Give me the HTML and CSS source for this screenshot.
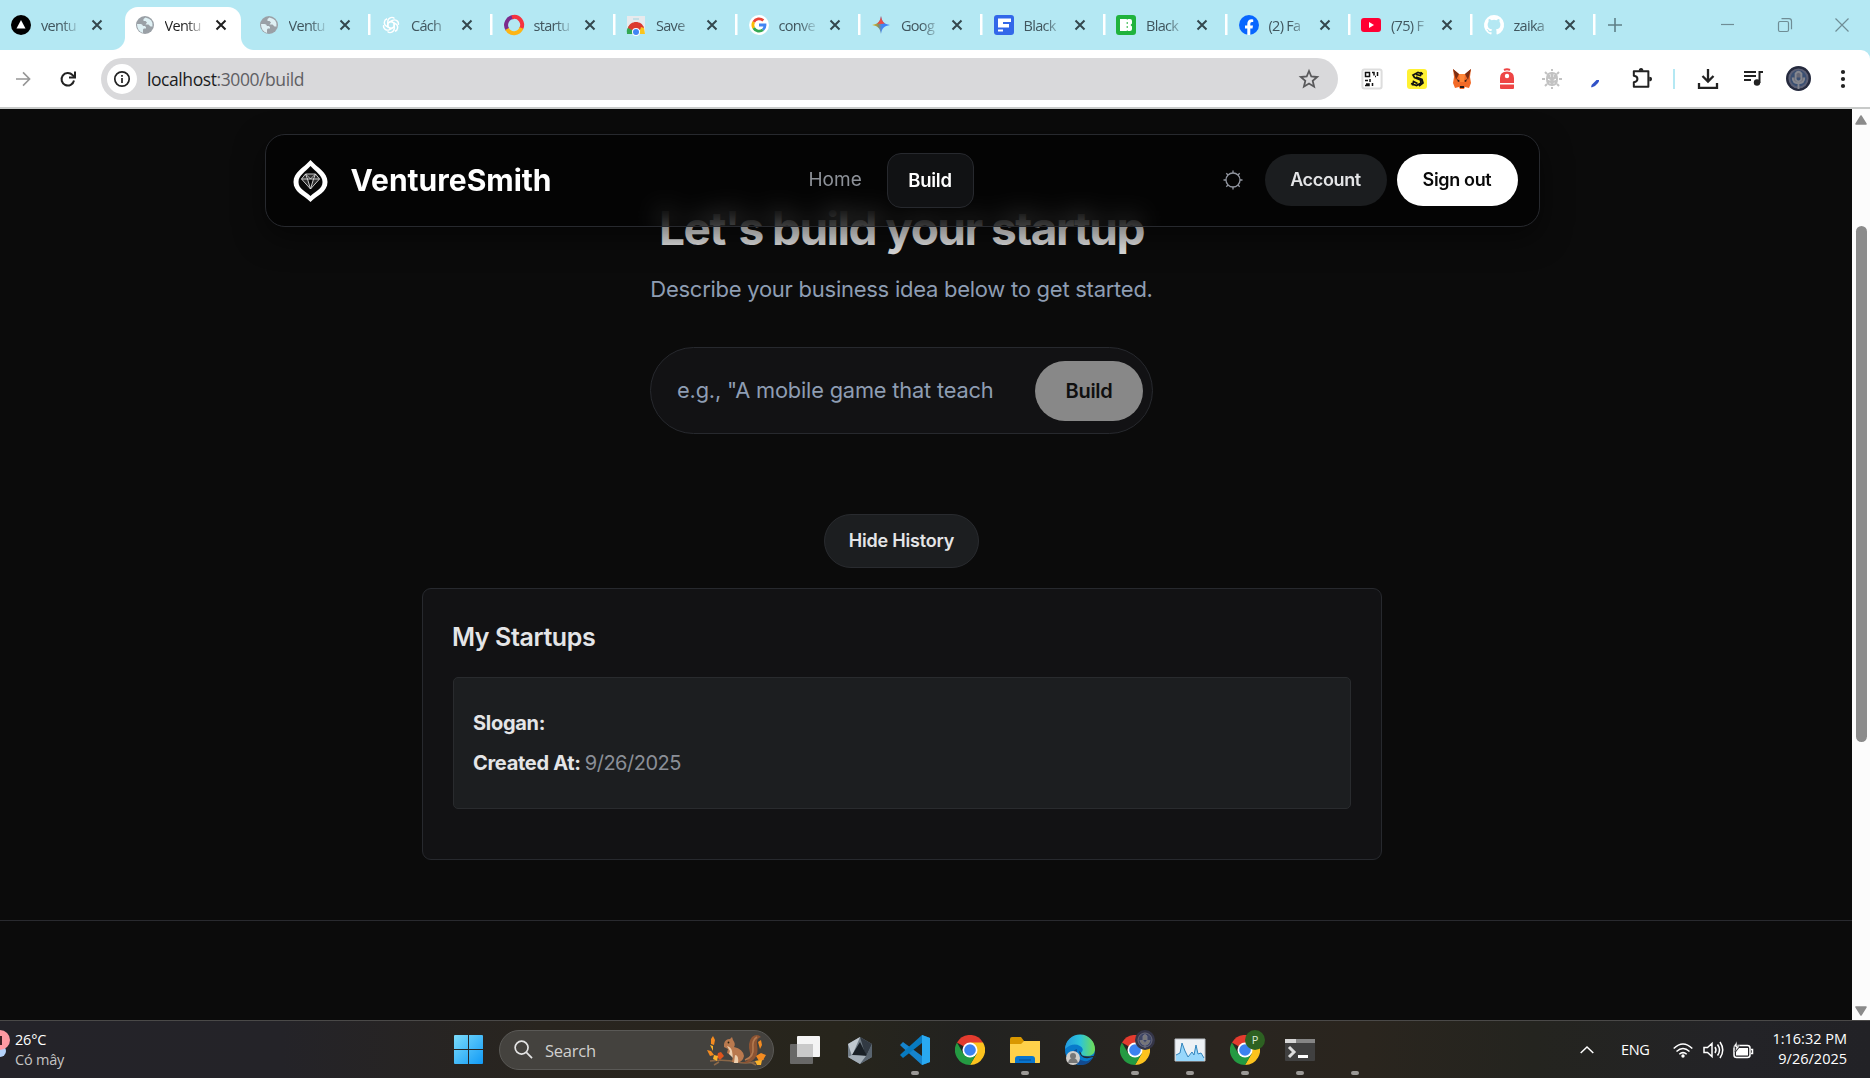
FILE: index.html
```html
<!DOCTYPE html>
<html lang="en">
<head>
<meta charset="utf-8">
<title>VentureSmith</title>
<link rel="stylesheet" href="styles.css">
</head>
<body>
<svg class="defs" width="0" height="0" aria-hidden="true">
  <defs>
    <symbol id="x" viewBox="0 0 12 12"><path d="M1.500 1.500l9 9M10.500 1.500l-9 9" stroke="currentColor" stroke-width="2"/></symbol>
    <symbol id="globe" viewBox="0 0 20 20"><circle cx="10" cy="10" r="9" fill="#9aa0a6"/><path d="M2 9h3.500q2 0 2.500 2h2q1.500 1 1 2.500H9q-1 0-1 1.500v3Q2 16 2 9zM10.500 2.500l-2 1.500v2h2l1.500 1.500-1.500 2h3l2 2h2Q18.500 4 10.500 2.500z" fill="#dff0f4"/></symbol>
    <symbol id="chrome" viewBox="0 0 32 32"><path d="M16 16L2.100 8A16 16 0 0 1 29.900 8z" fill="#e33b2e"/><path d="M16 8h13.900A16 16 0 0 1 16 32l7-12z" fill="#fcc31e"/><path d="M2.100 8A16 16 0 0 0 16 32l7-12-7 2-7-2z" fill="#249a42"/><circle cx="16" cy="16" r="8" fill="#fff"/><circle cx="16" cy="16" r="6.200" fill="#3b82f0"/></symbol>
  </defs>
</svg>
<div class="screen">
  <header class="tabs">
    <div class="tab"><svg viewBox="0 0 20 20"><circle cx="10" cy="10" r="10"/><path d="M10 5l4.500 8.500h-9z" fill="#fff"/></svg><span>ventu</span><svg class="close"><use href="#x"/></svg></div>
    <div class="tab active"><svg><use href="#globe"/></svg><span>Ventu</span><svg class="close"><use href="#x"/></svg></div>
    <div class="tab"><svg><use href="#globe"/></svg><span>Ventu</span><svg class="close"><use href="#x"/></svg></div>
    <div class="tab sep"><svg viewBox="0 0 20 20"><g fill="none" stroke="#fff" stroke-width="1.400"><path id="petal" d="M10 6.400L13.200 8.200V13.500A4 4 0 0 1 6.500 16.500"/><use href="#petal" transform="rotate(60 10 10)"/><use href="#petal" transform="rotate(120 10 10)"/><use href="#petal" transform="rotate(180 10 10)"/><use href="#petal" transform="rotate(240 10 10)"/><use href="#petal" transform="rotate(300 10 10)"/></g></svg><span>Cách</span><svg class="close"><use href="#x"/></svg></div>
    <div class="tab sep"><svg viewBox="0 0 20 20"><g fill="none" stroke-width="4"><path d="M10 2A8 8 0 0 0 3.500 14.500" stroke="#7d2a8c"/><path d="M8 2.200A8 8 0 0 1 17 14" stroke="#f5333f"/><path d="M3 14A8 8 0 0 0 17.500 13" stroke="#fdb515"/></g></svg><span>startu</span><svg class="close"><use href="#x"/></svg></div>
    <div class="tab sep"><svg viewBox="0 0 20 20"><path d="M1 1h18v18H1z" fill="#e8eaed"/><path d="M7 3h6v2H7z" fill="#c4dfe6"/><path d="M1 19a9 9 0 0 1 3-9l4 9z" fill="#34a853"/><path d="M2 13c2-8 14-8 16 0l-4 2H6z" fill="#dc3a30"/><path d="M13 19l2-7 3 1 1 6z" fill="#fbc51c"/><circle cx="10" cy="17" r="4" fill="#fff"/><circle cx="10" cy="17" r="3" fill="#4285f4"/></svg><span>Save</span><svg class="close"><use href="#x"/></svg></div>
    <div class="tab sep"><svg viewBox="0 0 20 20"><circle cx="10" cy="10" r="10" fill="#fff"/><g fill="none" stroke-width="2.800"><path d="M14.300 5.600A6.100 6.100 0 0 0 4.700 7" stroke="#ea4335"/><path d="M4.700 7a6.100 6.100 0 0 0 0 6" stroke="#fbbc05"/><path d="M4.700 13a6.100 6.100 0 0 0 9.300 1.700" stroke="#34a853"/><path d="M14 14.700a6.100 6.100 0 0 0 2-4.700h-6" stroke="#4285f4"/></g></svg><span>conve</span><svg class="close"><use href="#x"/></svg></div>
    <div class="tab sep"><svg viewBox="0 0 20 20"><defs><linearGradient id="gem"><stop stop-color="#fbbc04"/><stop offset=".35" stop-color="#89905f"/><stop offset=".55" stop-color="#4285f4"/><stop offset="1" stop-color="#347fff"/></linearGradient></defs><path d="M10 1c1 6 3 8 9 9-6 1-8 3-9 9-1-6-3-8-9-9 6-1 8-3 9-9z" fill="url(#gem)"/><path d="M10 1c.7 4 1.700 6 4 7.500L10 9 6 8.500C8.300 7 9.400 5 10 1z" fill="#ea4c45"/></svg><span>Goog</span><svg class="close"><use href="#x"/></svg></div>
    <div class="tab sep"><svg viewBox="0 0 20 20"><rect width="20" height="20" rx="3" fill="#3267e9"/><path d="M4 3.500h13V7H9v2h6v3.500H4z" fill="#fff"/><path d="M4 14.500h5v2H4z" fill="#fff"/></svg><span>Black</span><svg class="close"><use href="#x"/></svg></div>
    <div class="tab sep"><svg viewBox="0 0 20 20"><rect width="20" height="20" rx="3" fill="#20b33c"/><path d="M4 4h6.500l.7.800L12 4h2q2 0 2 2v2.500L14.500 10l1.500 1.500V14q0 2-2 2h-2l-.8-.8-.7.800H4z" fill="#fff"/><path d="M11.200 7v2M11.200 11v2" stroke="#20b33c" stroke-width="1"/></svg><span>Black</span><svg class="close"><use href="#x"/></svg></div>
    <div class="tab sep"><svg viewBox="0 0 20 20"><circle cx="10" cy="10" r="10" fill="#0866ff"/><path d="M8.300 20v-6.500H6v-3h2.300V9q0-4.700 4.500-4.700l1.400.2v2.600h-1.300q-1.600 0-1.600 1.700v1.700H14l-.5 3h-2.200V20z" fill="#fff"/></svg><span>(2) Fa</span><svg class="close"><use href="#x"/></svg></div>
    <div class="tab sep"><svg viewBox="0 0 20 20"><rect y="3" width="20" height="14" rx="3" fill="#ff0033"/><path d="M8 7l5 3-5 3z" fill="#fff"/></svg><span>(75) F</span><svg class="close"><use href="#x"/></svg></div>
    <div class="tab sep"><svg viewBox="0 0 16 16"><path fill="#fff" d="M8 0a8 8 0 0 0-2.530 15.590c.4.070.55-.17.55-.38v-1.490c-2.010.37-2.530-.49-2.690-.94-.09-.23-.48-.94-.82-1.130-.28-.15-.68-.52-.01-.53.63-.01 1.080.58 1.230.82.720 1.210 1.870.87 2.330.66.070-.52.280-.87.510-1.070-1.780-.2-3.640-.89-3.640-3.950 0-.87.310-1.590.82-2.150-.08-.2-.36-1.020.08-2.120 0 0 .67-.21 2.200.82a7.500 7.500 0 0 1 4 0c1.530-1.040 2.200-.82 2.200-.82.440 1.100.16 1.920.08 2.120.510.56.820 1.270.820 2.150 0 3.070-1.870 3.750-3.650 3.950.290.250.540.730.540 1.480v2.200c0 .21.150.46.550.38A8 8 0 0 0 8 0"/></svg><span>zaika</span><svg class="close"><use href="#x"/></svg></div>
    <div class="newtab sep"><svg viewBox="0 0 14 14"><path d="M7 0v14M0 7h14"/></svg></div>
    <div class="winbtns">
      <svg viewBox="0 0 14 14"><path d="M0 6.500h13"/></svg>
      <svg viewBox="0 0 14 14"><rect x=".5" y="3.500" width="10" height="10" rx="1.500"/><path d="M3.500.7h7.500q2.500 0 2.500 2.500v8"/></svg>
      <svg viewBox="0 0 14 14"><path d="M.5.5l13 13M13.500.5l-13 13"/></svg>
    </div>
  </header>
  <div class="toolbar">
    <svg class="fwd" viewBox="0 0 16 16"><path d="M0 8h14M7.500 1l7 7-7 7"/></svg>
    <svg class="reload" viewBox="0 0 16 16"><path d="M14 9.500A6.300 6.300 0 1 1 12.500 4L14.500 6"/><path d="M15 .5V6.500H9"/></svg>
    <div class="omni">
      <i><svg viewBox="0 0 16 16"><circle cx="8" cy="8" r="7.200"/><path d="M8 7v5M8 4v1.800"/></svg></i>
      <p><b>localhost</b>:3000/build</p>
      <svg class="star" viewBox="0 0 20 20"><path d="M10 2l2.300 5.500 5.900.5-4.500 3.900 1.400 5.800L10 14.600l-5.100 3.100 1.400-5.800L1.800 8l5.900-.5z"/></svg>
    </div>
    <div class="exts">
      <svg viewBox="0 0 20 20"><rect x=".4" y=".4" width="19.200" height="19.200" rx="2" fill="#fff" stroke="#ddd"/><path d="M3.500 3.500h4v4h-4zM10 3.500h2v3M13 7.500h1M15.500 3v4M3 11.500h3M8 10v3M4 15h3v1.500H3M10.500 14v3" fill="none" stroke="#111" stroke-width="1.500"/><path d="M14 11v3h3.500A3.500 3.500 0 1 1 14 11z"/></svg>
      <svg viewBox="0 0 20 20"><rect width="20" height="20" rx="3" fill="#fff133"/><path d="M16 5l-5-1.500L6 6l1.500 2.500 6 2.500.5 3-4.500 2.500L4 14.500M14.500 3l-1 3.500L9 5.500M9 8l6 2.500 1 3.500-4 3M5.500 16.500l1-4 4 2" fill="none" stroke="#111" stroke-width="1.700"/></svg>
      <svg viewBox="0 0 20 20"><path d="M1 0l6 5h6l6-5-1 8 1 6-2 5-4-1-1 2H8l-1-2-4 1-2-5 1-6z" fill="#f26a27"/><path d="M1 0l6 5-3 6zM19 0l-6 5 3 6z" fill="#7c2d12"/><path d="M5 10l3 2-2 1zM15 10l-3 2 2 1zM8 17h4v2H8z" fill="#271b18"/><path d="M7 5h6l-1 8h-4z" fill="#ff8637"/></svg>
      <svg viewBox="0 0 20 20"><path d="M7 1q3-1.500 6 0" fill="none" stroke="#ee4545"/><path d="M3 9q0-6.500 7-6.500T17 9v5H3zM3 15.500h14V19q0 1-1 1H4q-1 0-1-1z" fill="#ee4545"/><circle cx="10" cy="7" r="2.200" fill="#fff"/></svg>
      <svg viewBox="0 0 20 20"><g fill="none" stroke="#c2c2c2"><path d="M9.500 4Q5 4 5 10t4.500 6zM10.500 4Q15 4 15 10t-4.500 6zM7 6v3l2 1M6 12l3 1M13 6v3l-2 1M14 12l-3 1M10 0v2M10 18v2M0 10h3M17 10h3M3 3l2 2M17 3l-2 2M3 17l2-2M17 17l-2-2"/></g></svg>
      <svg viewBox="0 0 20 20"><path d="M9.500 11H12q.5 1-1 3l-3 3-3.500 1.500q-1-1 .5-3z" fill="#3152c8"/></svg>
      <svg class="puzzle" viewBox="0 0 22 24"><path d="M2 3.500h16v17H2v-5q4-.5 4-3.500T2 8.500z" fill="none" stroke="#222" stroke-width="2.200" stroke-linejoin="round"/><path d="M7.500 3q0-3 2.500-3t2.500 3zM19 9.500q3 0 3 2.500t-3 2.500z" fill="#222"/></svg>
    </div>
    <div class="tools">
      <svg class="dl" viewBox="0 0 20 20"><path d="M10 0v12M4.500 7L10 12.500 15.500 7M1 14v4.800h18V14"/></svg>
      <svg class="media" viewBox="0 0 20 20"><path d="M0 3h12M0 7h12M0 11h7M15.500 14V3H19"/><circle cx="13" cy="13.500" r="3.200"/></svg>
      <svg class="avatar" viewBox="0 0 26 26"><circle cx="13" cy="13" r="13" fill="#252a3e"/><circle cx="13" cy="13" r="9.500" fill="#3a4f72" stroke="#5c6076"/><path d="M10 8q3-4 6 0v6q-3 4-6 0zM7 12q0 6 6 6t6-6M13 18v6" fill="#666775" stroke="#85878f"/></svg>
      <svg class="menu" viewBox="0 0 6 22"><circle cx="3" cy="4" r="2.100"/><circle cx="3" cy="11" r="2.100"/><circle cx="3" cy="18" r="2.100"/></svg>
    </div>
  </div>
  <div class="viewport">
    <main class="page">
      <nav class="nav">
        <div class="brand">
          <svg viewBox="0 0 36 42"><path d="M18 0C25 8 35 12 35 22S25 35 18 42C11 35 1 32 1 22S11 8 18 0z" fill="#fff"/><path d="M18 6c5 6 12 9 12 16s-7 9-12 14C13 31 6 29 6 22S13 12 18 6z" fill="#070707"/><path d="M13 14h10l4 5-9 10-9-10zM9 19h18M13 14l2 5 3 10 3-10 2-5M13 14l5 5 5-5" fill="#777" fill-opacity=".35" stroke="#ddd" stroke-width=".9"/></svg>
          <span>VentureSmith</span>
        </div>
        <div class="links"><a>Home</a><a class="on"><span>Build</span></a></div>
        <div class="actions">
          <svg viewBox="0 0 20 20"><circle cx="10" cy="10" r="7"/><path d="M10 .5V3M10 17v2.500M.5 10H3M17 10h2.500M3.300 3.300L5 5M15 15l1.700 1.700M3.300 16.700L5 15M15 5l1.700-1.700"/></svg>
          <button class="account"><span>Account</span></button><button class="signout"><span>Sign out</span></button>
        </div>
      </nav>
      <section class="hero">
        <h1><span>Let's build your startup</span></h1>
        <p class="sub"><span>Describe your business idea below to get started.</span></p>
        <div class="idea"><span>e.g., "A mobile game that teach</span><button>Build</button></div>
        <button class="hide"><span>Hide History</span></button>
      </section>
      <section class="card">
        <h2><span>My Startups</span></h2>
        <div class="item">
          <p><strong class="slogan">Slogan:</strong></p>
          <p><strong class="created">Created At:</strong> <span class="date">9/26/2025</span></p>
        </div>
      </section>
      <footer class="foot"></footer>
    </main>
    <div class="scroll">
      <svg viewBox="0 0 14 12"><path d="M7 2l5 8h-10z"/></svg>
      <i></i>
      <svg viewBox="0 0 14 12"><path d="M7 10L2 2h10z"/></svg>
    </div>
  </div>
  <footer class="taskbar">
    <div class="weather"><svg viewBox="0 0 10 32"><circle cx="0" cy="21" r="6" fill="#b5d2fa"/><circle cx="0" cy="10" r="10" fill="#ff9aa2"/><path d="M1 6v9" stroke="#402024" stroke-width="2"/></svg><div><p>26°C</p><p class="dim">Có mây</p></div></div>
    <svg class="start" viewBox="0 0 30 30"><defs><linearGradient id="win" x2="1" y2="1"><stop stop-color="#7bdcfb"/><stop offset="1" stop-color="#119af6"/></linearGradient></defs><path d="M0 1q0-1 1-1h13.500v14.500H0zM15.500 0H29q1 0 1 1v13.500H15.500zM0 15.500h14.500V30H1q-1 0-1-1zM15.500 15.500H30V29q0 1-1 1H15.500z" fill="url(#win)"/></svg>
    <div class="search">
      <svg class="lens" viewBox="0 0 20 20"><circle cx="8" cy="8" r="6.800"/><path d="M13 13l6 6"/></svg><span>Search</span>
      <svg class="squirrel" viewBox="0 0 60 32"><path d="M3 27q15-2 27 1t27-3M12 28l-5 3M43 28l6 3" fill="none" stroke="#8a6748" stroke-width="1.500"/><path d="M32 29q12-1 11-10-3-10 2-16 5-4 9 0-5 1-4 8 3 14-10 18z" fill="#8d5433"/><path d="M38 26q9-3 8-12-1-8 4-11" fill="none" stroke="#b47a50" stroke-width="1.600"/><path d="M17 10q1-5 6-5l2-2 1 3q3 4 1 7 9 2 10 9-1 6-8 7l-4-1 1-6-6-3 1-4-4-2z" fill="#b9794e"/><path d="M20 12q4 1 5 5l1 7-4-4 1-3zM28 21q4 0 3 8h-4z" fill="#edcfae"/><circle cx="21.500" cy="8.500" r=".9" fill="#221"/><g fill="#f48b20"><path d="M4 5l2-3 2 4-1 5-3-1zM0 16l4 1 3 4-4 1zM51 8l3-2 1 5-2 4zM49 22l5-3 5 2-3 5-4 1z"/><path d="M11 19l3-1 3 4-4 4-3-3z" fill="#df541c"/><path d="M3 11l3 1v5zM48 27l7-1-1 5h-4zM7 21l4 1-1 5-4-2z" fill="#fbb32b"/></g></svg>
    </div>
    <div class="apps">
      <div class="app"><svg viewBox="0 0 30 30"><rect x="7" y="1" width="23" height="21" rx="1" fill="#f4f4f4"/><rect y="9" width="23" height="20" rx="1" fill="#747474" opacity=".85"/><path d="M7 9h16v13H7z" fill="#c9c9c9"/></svg></div>
      <div class="app"><svg viewBox="0 0 30 30"><path d="M15 2l12 7v13l-12 7-12-7V9z" fill="#737e88"/><path d="M15 2L3 9l4 12z" fill="#c0c8cf"/><path d="M15 2l12 7-6 13z" fill="#323a43"/><path d="M15 7l7 14-15-1z" fill="#1a2026"/><path d="M3 22l4-2 15 1-7 8z" fill="#a4aeb7"/><path d="M27 9v13l-12 7 6-8z" fill="#59646f"/></svg></div>
      <div class="app run"><svg viewBox="0 0 30 30"><path d="M22 0l8 3v24l-8 3L2 12l-2-2 3-3 19 14z" fill="#1684cd"/><path d="M22 0v8L3 23l-3-3 2-2z" fill="#087bc1"/><path d="M22 0l8 3v24l-8 3z" fill="#29a9f1"/></svg></div>
      <div class="app"><svg><use href="#chrome"/></svg></div>
      <div class="app run"><svg viewBox="0 0 30 30"><path d="M0 4q0-2 2-2h9l3 4h16v21q0 1-1 1H1q-1 0-1-1z" fill="#d99700"/><path d="M0 9h11l3-3h16v21q0 1-1 1H1q-1 0-1-1z" fill="#ffd14a"/><path d="M5 28v-4q0-3 3-3h14q3 0 3 3v4z" fill="#0875ce"/><path d="M9 25h12" stroke="#034c91"/></svg></div>
      <div class="app"><svg viewBox="0 0 30 30"><defs><linearGradient id="edge"><stop stop-color="#2399df"/><stop offset=".5" stop-color="#2cc4da"/><stop offset="1" stop-color="#72de52"/></linearGradient></defs><circle cx="15" cy="15" r="15" fill="#087acb"/><path d="M0 14A15 15 0 0 1 30 15q-1 6-8 6-6 0-6-3 4-4-1-7-7-4-15 3z" fill="url(#edge)"/><path d="M12 14q-2 10 7 12 5 1 9-4-4 9-13 8-9-2-8-10 1-5 5-6z" fill="#124b91"/><path d="M16 18q0 5 12 3l3-1v3l-3-1q-12 4-14-6z" fill="#25282b"/><circle cx="8" cy="23" r="7" fill="#d0cecb"/><circle cx="8" cy="21" r="3" fill="#777"/><path d="M3 28q1-5 5-5t5 5z" fill="#777"/></svg></div>
      <div class="app run"><svg><use href="#chrome"/></svg><svg class="badge" viewBox="0 0 20 20"><circle cx="10" cy="10" r="10" fill="#343548"/><circle cx="10" cy="10" r="7" fill="#3d4565" stroke="#676879"/><path d="M8 6q2-3 4 0v5q-2 3-4 0zM5 10q1 5 5 5t5-5M10 15v3" fill="#777" stroke="#777687"/></svg></div>
      <div class="app run"><svg viewBox="0 0 30 30"><path d="M0 4h30v22H0z" fill="#edf1f5" stroke="#b9bec3"/><path d="M1 20l4-2 2-10 3 8 3 6 4-5 2 3 2-10 2 9 3-1 3 5v3H1z" fill="#98d7fb"/><path d="M1 20l4-2 2-10 3 8 3 6 4-5 2 3 2-10 2 9 3-1 3 5" fill="none" stroke="#3285bd"/></svg></div>
      <div class="app run"><svg><use href="#chrome"/></svg><b class="badge">P</b></div>
      <div class="app run"><svg viewBox="0 0 30 30"><rect y="4" width="30" height="22" rx="1" fill="#404040"/><path d="M0 4h30v4H0z" fill="#858585"/><path d="M0 4h11v4H0z" fill="#d5d5d5"/><path d="M4 12l5 5-5 5" fill="none" stroke="#ddd" stroke-width="3"/><path d="M13 21.500h10" stroke="#fff" stroke-width="3"/></svg></div>
      <div class="app run"></div>
    </div>
    <div class="tray">
      <svg class="chev" viewBox="0 0 14 8"><path d="M.7 7L7 1l6.300 6"/></svg>
      <span class="eng">ENG</span>
      <svg class="wifi" viewBox="0 0 20 16"><path d="M.7 6.500Q10-2.500 19.300 6.500M3.500 9.500q6.500-6 13 0M6.300 12.200q3.700-3.200 7.400 0"/><circle cx="10" cy="14" r="1.700" fill="#fff" stroke="none"/></svg>
      <svg class="vol" viewBox="0 0 20 18"><path d="M1 6.500h3.500L9 2.500v13l-4.500-4H1zM12 6q2 3 0 6M14.500 3.500q4 5.500 0 11M17 1q5.500 8 0 16"/></svg>
      <svg class="bat" viewBox="0 0 20 18"><rect x="1" y="4.500" width="16" height="12" rx="2.500"/><path d="M18 8.500h1.500v4H18" /><path d="M6 7h9v7.500H3V11z" fill="#fff" stroke="none"/><path d="M4 0L0 6h3l-1 5 5-6H4z" fill="#fff" stroke="#232327" stroke-width=".6"/></svg>
      <div class="clock"><p><span>1:16:32 PM</span></p><p class="day"><span>9/26/2025</span></p></div>
    </div>
  </footer>
</div>
</body>
</html>
```
FILE: styles.css
```css
* { box-sizing: border-box; }
body { margin: 0; background: #0b0b0b; font-family: "Open Sans", "Noto Sans", sans-serif; overflow: hidden; }
p, h1, h2 { margin: 0; }
svg { display: block; flex: none; overflow: visible; }
button { border: 0; padding: 0; font: inherit; }
.defs { position: absolute; }
.screen { width: 1870px; height: 1078px; display: flex; flex-direction: column; background: #b4e8f3; }

/* Tab strip */
.tabs { height: 50px; background: #b4e8f3; display: flex; flex: none; }
.tab { width: 122.500px; height: 50px; flex: none; display: flex; align-items: center; padding-left: 11px; position: relative; color: #41565e; font-size: 14.500px; }
.tab > svg { width: 20px; height: 20px; }
.tab span { width: 38px; margin-left: 10px; white-space: nowrap; letter-spacing: -.7px; -webkit-mask-image: linear-gradient(90deg, #000 55%, rgba(0, 0, 0, .15) 98%); mask-image: linear-gradient(90deg, #000 55%, rgba(0, 0, 0, .15) 98%); }
.tab .close { width: 12px; height: 12px; margin-left: 12px; color: #34484e; }
.tab.active { color: #1f1f1f; padding-left: 12px; }
.tab.active .close { color: #1f1f1f; }
.tab.active::before { content: ""; position: absolute; z-index: 0; left: 2.500px; top: 7px; width: 116px; height: 43px; border-radius: 13px 13px 0 0; background: #fff; }
.tab.active::after { content: ""; position: absolute; left: -10.500px; width: 142px; bottom: 0; height: 13px; background: radial-gradient(circle at 0 0, transparent 12.500px, #fff 13.500px) left / 13px 13px no-repeat, radial-gradient(circle at 100% 0, transparent 12.500px, #fff 13.500px) right / 13px 13px no-repeat; }
.tab.active > * { position: relative; z-index: 1; }
.sep { background: linear-gradient(#fff, #fff) 0 14px / 2.500px 21px no-repeat; }
.tab.sep > svg:first-child, .tab:nth-child(3) > svg:first-child { margin-left: 2.500px; }
.newtab { width: 60px; padding: 18px 0 0 15px; }
.newtab svg { width: 14px; height: 14px; stroke: #5f7f87; stroke-width: 1.600; }
.winbtns { margin-left: auto; display: flex; gap: 43px; padding: 18px 21px 0 0; }
.winbtns svg { width: 14px; height: 14px; fill: none; stroke: #6f8d95; stroke-width: 1.200; }

/* Address bar */
.toolbar { height: 59px; flex: none; background: #fff; border-bottom: 2px solid #c8cac9; display: flex; align-items: center; padding: 0 20px 0 16px; border-top-right-radius: 9px; }
.toolbar svg { fill: none; stroke: #222; stroke-width: 2; }
.fwd { width: 15px; height: 16px; }
.toolbar .fwd { stroke: #969696; stroke-width: 1.700; }
.reload { width: 16px; height: 16px; margin-left: 29px; }
.omni { width: 1237px; height: 42px; margin-left: 25px; border-radius: 21px; background: #d9d9db; display: flex; align-items: center; padding: 0 19px 0 6px; font-size: 17.500px; color: #606064; flex: none; }
.omni i { width: 30px; height: 30px; border-radius: 50%; background: #fff; display: grid; place-items: center; }
.omni i svg { width: 16px; height: 16px; stroke-width: 1.700; }
.omni p { margin-left: 10px; padding-top: 1px; letter-spacing: -.42px; }
.omni b { font-weight: 400; color: #1c1c1e; }
.omni .star { width: 20px; height: 20px; margin-left: auto; stroke: #5a5a5c; stroke-width: 1.800; }
.exts { display: flex; align-items: center; gap: 25px; margin-left: 24px; }
.exts svg { width: 20px; height: 20px; stroke: none; }
.exts .puzzle { width: 20px; height: 22px; }
.tools { border-left: 2.500px solid #b4e8f3; height: 20px; display: flex; align-items: center; margin-left: 21px; padding-left: 23px; }
.tools .dl { width: 20px; height: 20px; stroke-width: 2.300; }
.tools .media { width: 20px; height: 20px; margin-left: 26px; }
.media circle { fill: #222; stroke: none; }
.tools .avatar { width: 25px; height: 25px; margin-left: 22px; stroke: none; }
.tools .menu { width: 6px; height: 22px; margin-left: 29px; fill: #222; stroke: none; }

/* Page */
.viewport { height: 911px; flex: none; display: flex; background: #0b0b0b; font-family: "Inter", "Liberation Sans", sans-serif; }
.page { width: 1852px; padding-top: 25px; padding-right: 48px; display: flex; flex-direction: column; align-items: center; }
.nav { width: 1275px; height: 93px; flex: none; border: 1px solid #27292e; border-radius: 20px; background: rgba(0, 0, 0, .6); -webkit-backdrop-filter: blur(12px); backdrop-filter: blur(12px); box-shadow: 0 10px 30px rgba(0, 0, 0, .5); display: flex; align-items: center; padding: 0 21px 0 26px; position: relative; z-index: 2; white-space: nowrap; }
.brand { display: flex; align-items: center; width: 516px; }
.brand svg { width: 37px; height: 42px; }
.brand span { margin-left: 22px; padding-bottom: 2px; font-size: 30px; font-weight: 700; color: #fff; letter-spacing: 0; }
.links { display: flex; align-items: center; font-size: 18.500px; letter-spacing: -.25px; }
.links a { color: #8d9198; width: 79px; }
.links a:first-child { font-size: 19px; padding: 0 0 2px 1px; letter-spacing: 0; }
.links .on { width: 87px; height: 55px; border: 1px solid #27292e; border-radius: 14px; background: #111214; color: #fff; font-weight: 600; display: grid; place-items: center; padding-bottom: 2px; }
.actions { margin-left: auto; display: flex; align-items: center; gap: 10px; font-size: 18px; font-weight: 600; padding-bottom: 2px; }
.actions svg { width: 20px; height: 20px; margin-right: 12px; fill: none; stroke: #9296a0; stroke-width: 1.300; }
.actions button { width: 122px; height: 52px; border-radius: 26px; background: #1b1d1f; color: #e4e5e7; letter-spacing: -.35px; }
.actions .signout { background: #fff; color: #090909; width: 121px; }
.hero { display: flex; flex-direction: column; align-items: center; margin: -29px 1px 0 0; }
h1 { font-size: 46px; line-height: 60px; height: 60px; color: #e2e2e2; letter-spacing: -1.530px; font-weight: 700; white-space: nowrap; }
.sub { margin-top: 6px; height: 50px; line-height: 50px; font-size: 22px; color: #8e9db3; letter-spacing: -.260px; white-space: nowrap; }
.idea { margin-top: 33px; width: 503px; height: 87px; border-radius: 44px; border: 1px solid #27292e; background: #121214; padding: 0 9px 0 26px; display: flex; align-items: center; justify-content: space-between; color: #8e9db3; font-size: 21.800px; letter-spacing: -.180px; white-space: nowrap; }
.idea span { padding-bottom: 2px; }
.idea button { width: 108px; height: 60px; border-radius: 30px; background: #888; color: #101010; font-size: 20px; font-weight: 600; letter-spacing: -.3px; }
.hide { margin-top: 80px; width: 155px; height: 54px; border: 1px solid #292b2f; border-radius: 27px; color: #e4e5e7; background: #1c1e20; font-size: 18px; font-weight: 600; letter-spacing: -.2px; padding-bottom: 2px; }
.card { margin-top: 20px; width: 960px; height: 272px; flex: none; border: 1px solid #27292e; border-radius: 9px; background: #121214; padding: 27px 30px; color: #e4e5e7; }
h2 { font-size: 25px; line-height: 42px; height: 42px; font-weight: 600; letter-spacing: -.4px; }
h2 span { margin-left: -1px; }
.item { margin-top: 19px; height: 132px; border: 1px solid #292b2e; border-radius: 5px; background: #1c1e20; padding: 25px 19px; font-size: 20px; line-height: 40px; color: #8b8f97; white-space: nowrap; }
.item strong { color: #e4e5e7; letter-spacing: -.3px; }
.date { letter-spacing: -.5px; margin-left: -1.500px; }
.foot { margin: 60px -48px 0 0; width: 1852px; border-top: 1px solid #292a2f; }
.scroll { width: 18px; background: #fcfcfc; display: flex; flex-direction: column; align-items: center; padding: 5px 0 3px; }
.scroll svg { width: 14px; height: 12px; fill: #8b8b8b; stroke: #8b8b8b; stroke-width: 1.500; stroke-linejoin: round; }
.scroll i { width: 11px; height: 516px; margin: 100px 0 auto; background: #8b8b8b; border-radius: 6px; }

/* Taskbar */
.taskbar { height: 58px; flex: none; border-top: 1px solid #4a4948; background: linear-gradient(90deg, #242329 0, #242328 15%, #29251f 29%, #27251c 45%, #222220 52%, #292520 65%, #2a251e 73%, #24241f 82%, #232327 93%, #222226); display: flex; align-items: center; color: #fff; font-size: 14.500px; }
.weather { width: 454px; display: flex; line-height: 20px; letter-spacing: -.2px; }
.weather > svg { width: 10px; height: 32px; margin-right: 5px; overflow: hidden; }
.dim { color: #c4c4c4; }
.start { width: 29px; height: 29px; }
.search { width: 275px; height: 40px; margin-left: 16px; border-radius: 20px; border: 1px solid #5a5956; background: #44423e; display: flex; align-items: center; padding: 0 6px 0 14px; color: #d0d0ce; font-size: 16.500px; }
.lens { width: 19px; height: 19px; fill: none; stroke: #e4e4e4; stroke-width: 1.800; }
.search span { margin-left: 12px; padding-top: 1px; letter-spacing: -.25px; }
.squirrel { width: 60px; height: 32px; margin-left: auto; }
.apps { display: flex; margin-left: 3px; }
.app { width: 55px; height: 56px; padding: 13px 0 0 13px; position: relative; }
.app > svg { width: 30px; height: 30px; }
.app.run::after { content: ""; position: absolute; left: 24px; bottom: 3px; width: 8px; height: 4px; border-radius: 2px; background: #9b9996; }
.app .badge { position: absolute; left: 28px; top: 8px; width: 20px; height: 20px; border-radius: 50%; }
b.badge { background: #2d6122; color: #dce8d8; font-size: 11px; font-weight: 400; line-height: 20px; text-align: center; }
.tray { margin-left: auto; padding-right: 23px; display: flex; align-items: center; }
.tray svg { fill: none; stroke: #fff; stroke-width: 1.500; }
.chev { width: 14px; height: 8px; }
.eng { margin-left: 27px; width: 29px; letter-spacing: -.4px; white-space: nowrap; }
.wifi { width: 20px; height: 16px; margin-left: 23px; }
.vol { width: 20px; height: 18px; margin-left: 10px; }
.bat { width: 20px; height: 18px; margin-left: 10px; }
.clock { width: 74px; margin-left: 20px; padding-bottom: 1px; line-height: 20px; letter-spacing: 0; white-space: nowrap; display: flex; flex-direction: column; align-items: flex-end; }
```
